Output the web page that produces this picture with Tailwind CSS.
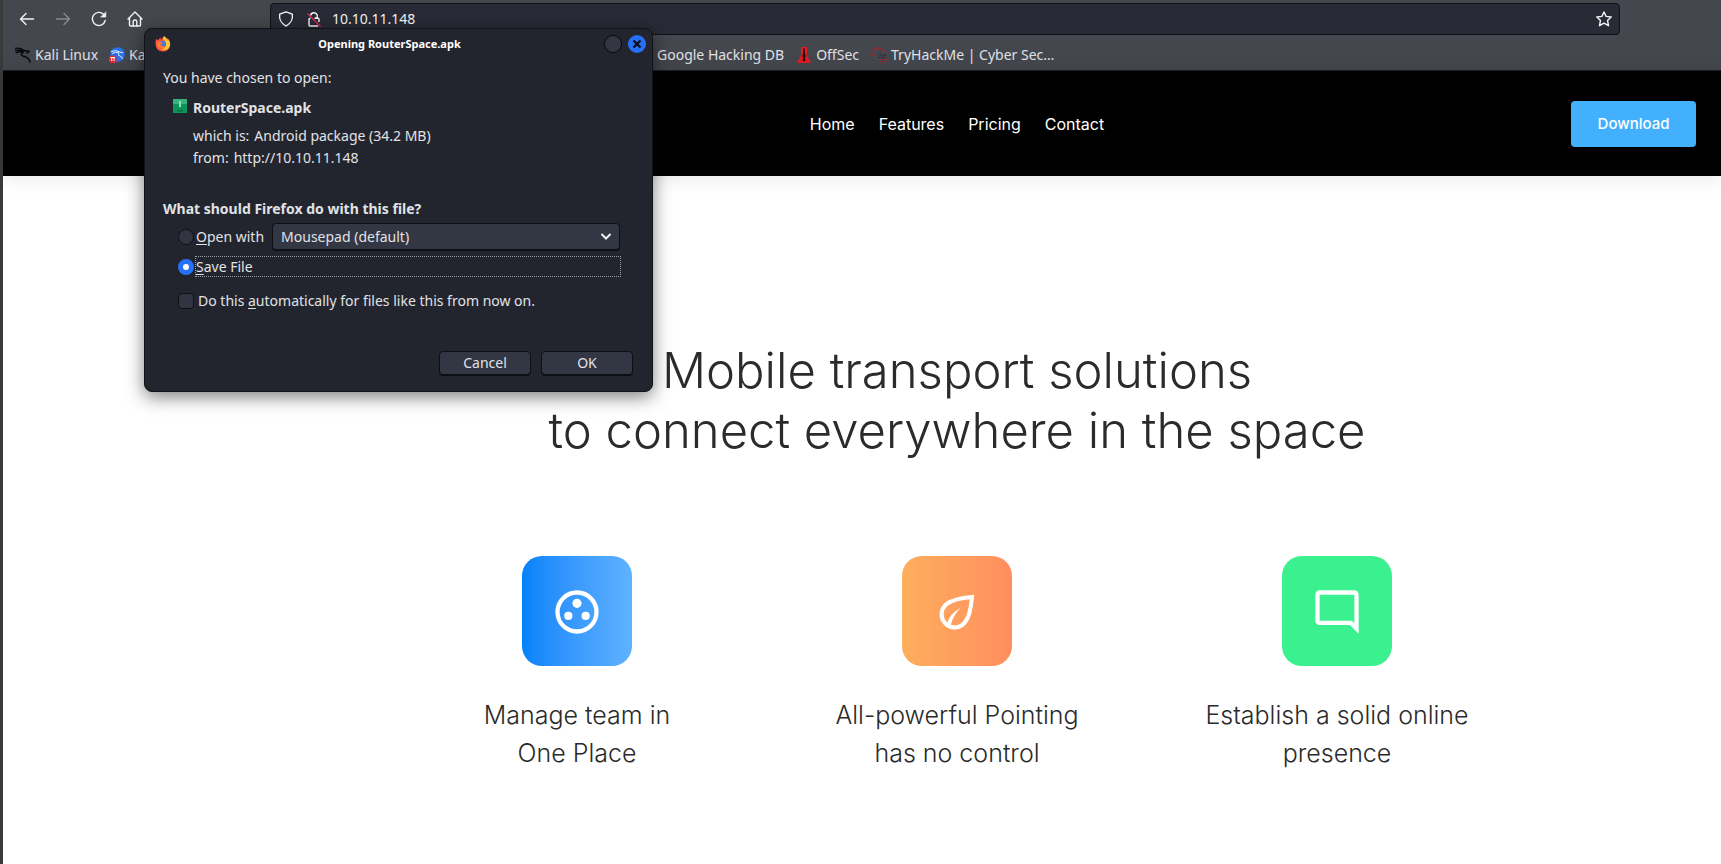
<!DOCTYPE html>
<html lang="en">
<head>
<meta charset="utf-8">
<title>RouterSpace</title>
<script src="https://cdn.jsdelivr.net/npm/@tailwindcss/browser@4"></script>
</head>
<body class="min-h-screen overflow-x-hidden bg-white font-['Noto_Sans',sans-serif] text-[#e0e2e6]">
<div class="relative flex min-h-screen flex-col border-l-3 border-[#3a3a3c]">

  <!-- Browser toolbar -->
  <header class="border-b border-[#1b1d22] bg-[#45474e]">
    <div class="flex h-9 items-center pt-0.5 pr-[101px] pl-4 text-[#f4f4f5]">
      <div class="flex w-[251px] shrink-0 gap-5">
        <button aria-label="Back" class="size-4"><svg viewBox="0 0 16 16" class="size-4" fill="none" stroke="currentColor" stroke-width="1.4" stroke-linecap="round" stroke-linejoin="round"><path d="M14.5 8H1.5M7 2.5L1.5 8L7 13.5"/></svg></button>
        <button aria-label="Forward" class="size-4 text-[#888a90]"><svg viewBox="0 0 16 16" class="size-4" fill="none" stroke="currentColor" stroke-width="1.4" stroke-linecap="round" stroke-linejoin="round"><path d="M1.5 8H14.5M9 2.5L14.5 8L9 13.5"/></svg></button>
        <button aria-label="Reload" class="size-4"><svg viewBox="0 0 16 16" class="size-4" fill="none" stroke="currentColor" stroke-width="1.4" stroke-linecap="round"><path d="M14.2 9.5A6.5 6.5 0 1 1 12.5 3.3"/><path d="M14.8 1.2V6.1H9.9Z" fill="currentColor" stroke-width=".6"/></svg></button>
        <button aria-label="Home" class="size-4"><svg viewBox="0 0 16 16" class="size-4" fill="none" stroke="currentColor" stroke-width="1.4" stroke-linecap="round" stroke-linejoin="round"><path d="M1 8L8 1L15 8M2.5 7V14Q2.500 15 3.500 15H12.500Q13.500 15 13.500 14V7"/><path d="M6.200 15V10.200Q6.200 9 8 9Q9.800 9 9.800 10.200V15"/></svg></button>
      </div>
      <div class="flex h-8 flex-1 items-center rounded border border-[#101116] bg-[#282a36] px-[7px]">
        <svg viewBox="0 0 16 16" class="size-4 shrink-0" fill="none" stroke="currentColor" stroke-width="1.4" stroke-linejoin="round"><path d="M8 .8L14.300 3.200C15 7.500 13 12.500 8 15.200C3 12.500 1 7.500 1.700 3.200Z"/></svg>
        <svg viewBox="0 0 16 16" class="ml-3 size-4 shrink-0" fill="none" stroke="currentColor" stroke-width="1.4"><path d="M4.500 4.500A3.500 3.500 0 0 1 11.200 4V7H9M4.500 7.200Q3 7.200 3 8.200V14Q3 15 4 15H12M8.500 7.200H12Q13 7.200 13 8.200V11"/><path d="M1.500 2.500L14.500 15.500" stroke="#e22850" stroke-width="1.300"/></svg>
        <input aria-label="Address" value="10.10.11.148" class="ml-2.5 min-w-0 flex-1 bg-transparent text-sm text-[#f4f4f5] outline-none">
        <button aria-label="Bookmark this page" class="size-4 shrink-0"><svg viewBox="0 0 16 16" class="size-4" fill="none" stroke="currentColor" stroke-width="1.400" stroke-linejoin="round"><path d="M8 1L10.100 5.400L15.200 6L11.500 9.400L12.500 14.700L8 12.200L3.500 14.700L4.500 9.400L.8 6L5.900 5.400Z"/></svg></button>
      </div>
    </div>
    <nav aria-label="Bookmarks" class="flex h-[34px] items-center pt-1 pl-3 text-sm whitespace-nowrap">
      <a href="#" class="flex w-[94px] shrink-0 items-center gap-1">
        <svg viewBox="0 0 16 16" class="size-4 shrink-0" fill="none" stroke="#090a0c" stroke-width="1.500"><path d="M0 1.500Q5 .5 9 3.500L14 4.500L11.500 6.500M0 3.800Q5 2.200 9 4.500M1 6Q4 4 8 5.300Q4.500 8 8.500 9.200Q14 10 15.200 15.500"/></svg>
        Kali Linux
      </a>
      <a href="#" class="flex w-[528px] shrink-0 items-center gap-1">
        <svg viewBox="0 0 16 16" class="size-4 shrink-0"><circle cx="8.500" cy="7.500" r="7.300" fill="#2673ee"/><path d="M2 4.500Q7 2.500 11 5L14 6M3 6.500Q7 4 10 6Q8 8.500 11 9Q13 9.500 13.500 12" fill="none" stroke="#e6efff" stroke-width="1"/><rect y="8.500" width="7.500" height="7.500" rx="2.500" fill="#e52b32"/><path d="M1.500 10.500H6M2.700 10.500V14M5 10.500V14" stroke="#fff" fill="none"/></svg>
        Kali Tools
      </a>
      <a href="#" class="mr-3 shrink-0 pl-5">Google Hacking DB</a>
      <a href="#" class="mr-3 flex shrink-0 items-center gap-1">
        <svg viewBox="0 0 16 16" class="size-4 shrink-0"><path d="M5 0H11L11 8L15 16H1L5 8Z" fill="#e01b22"/><path d="M7.200 1.500H8.800V6L9.600 9L8.700 11L9.500 14H6.500L7.300 11L6.400 9L7.200 6Z" fill="#19090b"/></svg>
        OffSec
      </a>
      <a href="#" class="flex shrink-0 items-center gap-1">
        <svg viewBox="0 0 16 16" class="size-4 shrink-0" fill="none"><path d="M5 9H2.500A2.400 2.400 0 0 1 2.300 4.400Q3 1 6.500 1Q9.500 0 11 3.300Q14.500 3.300 14.800 6" stroke="#c5161c"/><path d="M8 8H11M12 8H15M7 10.500H9M10 10.500H14" stroke="#2b2d33"/><path d="M8 12.500H11M13 12.500H16M9 15H12M13 14.500H15" stroke="#a3262b"/></svg>
        TryHackMe | Cyber Sec…
      </a>
    </nav>
  </header>

  <!-- Site navigation -->
  <div class="flex h-[105px] items-center bg-black pr-[25px] pl-[340px] font-[Inter,sans-serif] text-[15px] text-white shadow-[0_0_20px_rgba(0,0,0,0.12)]">
    <nav aria-label="Main" class="flex flex-1 justify-center gap-6 text-base">
      <a href="#">Home</a>
      <a href="#">Features</a>
      <a href="#">Pricing</a>
      <a href="#">Contact</a>
    </nav>
    <a href="#" class="flex h-[46px] w-[125px] items-center justify-center rounded bg-[#42b0fc] pt-0.5 font-medium">Download</a>
  </div>

  <!-- Hero -->
  <main class="flex flex-col items-center pt-[165px] pl-[190px] font-[Inter,sans-serif] font-light text-[#2b2b2b]">
    <h1 class="text-center text-[49px] leading-[60px] font-light">Mobile transport solutions<br>to connect everywhere in the space</h1>
    <div class="mt-[95px] grid w-full max-w-[1140px] grid-cols-3 text-center text-[25px] leading-[38px]">
      <section class="flex flex-col items-center gap-[30px]">
        <div class="flex size-[110px] items-center justify-center rounded-[20px] bg-linear-to-r from-[#0082fa] to-[#5fb2ff] pt-0.5 text-white">
          <svg viewBox="0 0 24 24" class="size-[52px]"><circle cx="12" cy="12" r="9" fill="none" stroke="currentColor" stroke-width="2"/><g fill="currentColor"><circle cx="12" cy="8" r="2.100"/><circle cx="8" cy="13.800" r="1.900"/><circle cx="16" cy="13.800" r="1.900"/></g></svg>
        </div>
        <h2>Manage team in<br>One Place</h2>
      </section>
      <section class="flex flex-col items-center gap-[30px]">
        <div class="flex size-[110px] items-center justify-center rounded-[20px] bg-linear-to-r from-[#fdae5c] to-[#ff8e5e] pt-0.5 text-white">
          <svg viewBox="0 0 24 24" class="size-[52px]"><path d="M18.900 5.100Q10.500 5.800 7.300 8.300A6 6 0 1 0 15.700 16.700Q18.200 13.800 18.900 5.100Z" fill="none" stroke="currentColor" stroke-width="1.900"/><path d="M7.300 17.500Q8.500 13 13.500 10.200Q10 14 9 18.500Z" fill="currentColor"/></svg>
        </div>
        <h2>All-powerful Pointing<br>has no control</h2>
      </section>
      <section class="flex flex-col items-center gap-[30px]">
        <div class="flex size-[110px] items-center justify-center rounded-[20px] bg-[#3af08f] pt-0.5 text-white">
          <svg viewBox="0 0 24 24" class="size-[52px]" fill="currentColor"><path d="M20 17.170L18.830 16H4V4h16v13.170zM20 2H4c-1.100 0-2 .9-2 2v12c0 1.100.9 2 2 2h14l4 4V4c0-1.100-.9-2-2-2z"/></svg>
        </div>
        <h2>Establish a solid online<br>presence</h2>
      </section>
    </div>
  </main>

  <!-- Download dialog floating over the page -->
  <div role="dialog" aria-labelledby="dialog-title" class="absolute top-7 left-[141px] w-[509px] rounded-lg border border-[#111218] bg-[#23252e] pb-4 text-sm leading-5 shadow-[0_5px_18px_rgba(0,0,0,0.5)]">
    <div class="flex h-[30px] items-center gap-1.5 px-2.5 pr-1.5 text-white">
      <svg viewBox="0 0 16 16" class="size-4 shrink-0"><path d="M1 3L3 4.200L5.500 1.500L6 4L9 0L11 3L12.500 2Q16 6 15 10Q13.500 15.500 8 15.500Q1.500 15 .6 9Q.4 5.500 1 3Z" fill="#ff553c"/><path d="M9 0Q12 2 12.500 4.500L13 3Q17 8 13.500 12.500Q10 15 6 13.500Q12 12 11 6.500Q10 4 8 3.500Z" fill="#ffc936"/><circle cx="7.500" cy="8" r="3.300" fill="#4775e8"/><path d="M2 6Q5 5 8 7Q6 8 5.500 9Q7 11 10.500 10Q8 13.500 4.500 12Q1.500 10 2 6Z" fill="#ff7c30"/></svg>
      <h2 id="dialog-title" class="flex-1 pl-1 text-center text-[11px] font-bold">Opening RouterSpace.apk</h2>
      <button aria-label="Maximize" class="size-[18px] rounded-full border border-[#08090c] bg-[#343743]"></button>
      <button aria-label="Close" class="flex size-[18px] items-center justify-center rounded-full bg-[#276ff5]"><svg viewBox="0 0 10 10" class="size-2.5" stroke="#0b0d14" stroke-width="2.200"><path d="M1.500 1.500L8.500 8.500M8.500 1.500L1.500 8.500"/></svg></button>
    </div>
    <div class="pt-[9px] pr-[19px] pl-[18px]">
      <p>You have chosen to open:</p>
      <div class="mt-2.5 flex items-start gap-1.5 pl-2.5">
        <svg viewBox="0 0 14 14" class="mt-px size-3.5 shrink-0"><path d="M0 0H14V14H0Z" fill="#0c9559"/><path d="M0 0H14V5H0Z" fill="#36b47c"/><path d="M6 2H8V8H6Z" fill="#91ddb5"/><path d="M4 12.500V10.500L6 11H8L10 10.500V12.500" fill="#087044"/></svg>
        <div>
          <p class="font-bold">RouterSpace.apk</p>
          <dl class="mt-[7px] leading-[22px]">
            <div class="flex gap-[5px]"><dt>which is:</dt><dd>Android package (34.2 MB)</dd></div>
            <div class="flex gap-[5px]"><dt>from:</dt><dd>http://10.10.11.148</dd></div>
          </dl>
        </div>
      </div>
      <fieldset class="mt-[30px]">
        <legend class="font-bold">What should Firefox do with this file?</legend>
        <div class="mt-1 flex items-center pr-[13px] pl-[15px]">
          <input id="open" name="action" type="radio" class="size-4 shrink-0 appearance-none rounded-full border border-[#101116] bg-[#323541]">
          <label for="open" class="ml-0.5 shrink-0 whitespace-nowrap"><u class="underline-offset-2">O</u>pen with</label>
          <div class="relative ml-2 min-w-0 flex-1">
            <select aria-label="Application" class="h-[27px] w-full appearance-none rounded border border-[#0e0f14] bg-[#333643] px-2 shadow-[0_1px_0_#0e0f14]"><option>Mousepad (default)</option></select>
            <svg viewBox="0 0 12 8" class="pointer-events-none absolute top-2.5 right-2 h-2 w-3" fill="none" stroke="#f0f0f0" stroke-width="2" stroke-linecap="round"><path d="M2 1.500L6 5.500L10 1.500"/></svg>
          </div>
        </div>
        <div class="mt-1.5 flex items-center pr-3 pl-[15px]">
          <input id="save" name="action" type="radio" checked class="size-4 shrink-0 appearance-none rounded-full border-5 border-[#2670f6] bg-white">
          <label for="save" class="ml-px flex-1 border border-dotted border-[#9c9da2] leading-[19px]"><u class="underline-offset-2">S</u>ave File</label>
        </div>
        <div class="mt-3.5 flex items-center gap-1 pl-[15px]">
          <input id="auto" type="checkbox" class="size-4 shrink-0 appearance-none rounded-sm border border-[#101116] bg-[#323541]">
          <label for="auto">Do this <u class="underline-offset-2">a</u>utomatically for files like this from now on.</label>
        </div>
      </fieldset>
      <div class="mt-10 flex justify-end gap-2.5">
        <button class="h-6 w-[92px] rounded border border-[#0e0f14] bg-[#333643] shadow-[0_1px_0_#0e0f14]">Cancel</button>
        <button class="h-6 w-[92px] rounded border border-[#0e0f14] bg-[#333643] shadow-[0_1px_0_#0e0f14]">OK</button>
      </div>
    </div>
  </div>
</div>
</body>
</html>
